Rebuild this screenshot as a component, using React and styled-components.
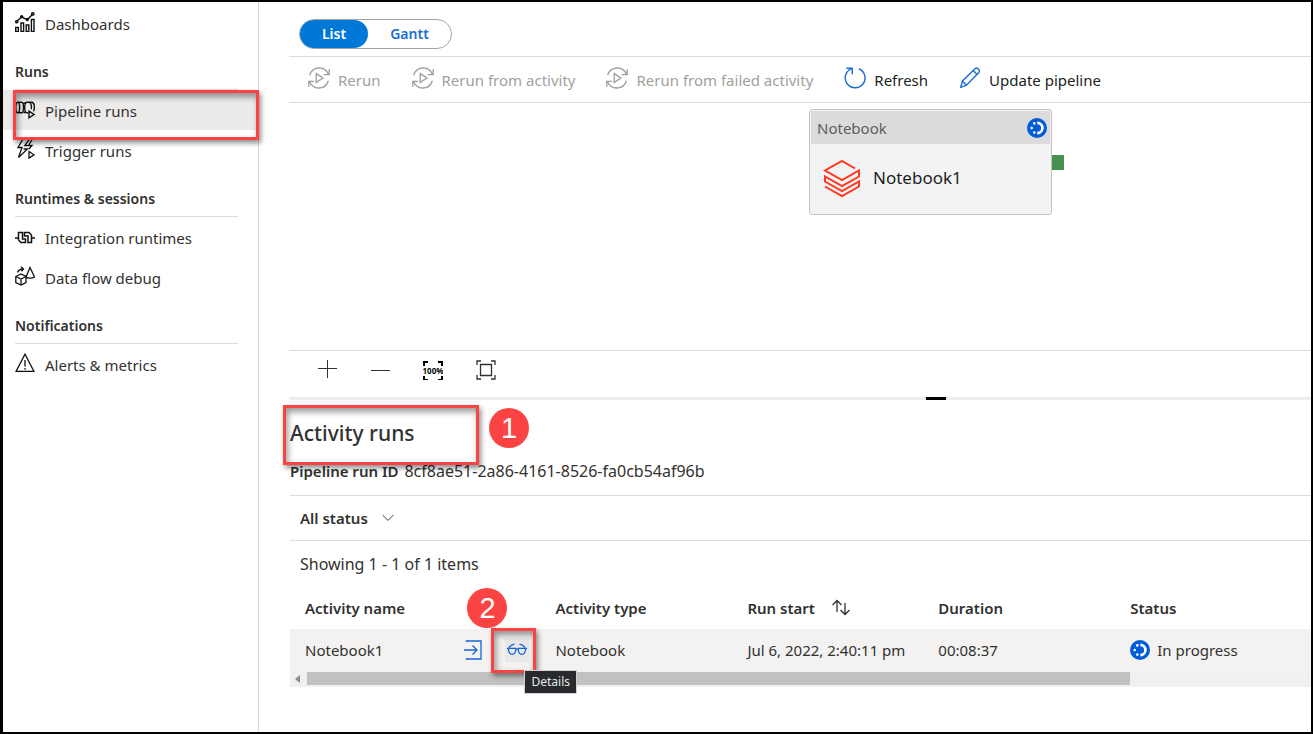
import React from "react";
import styled, { createGlobalStyle } from "styled-components";

const Global = createGlobalStyle`
  * { box-sizing: border-box; }
  body { margin: 0; background: #fff; }
  body, button, select { font-family: "Noto Sans", "Open Sans", sans-serif; font-size: 15px; line-height: 20px; color: #323130; }
  h1, h2, p { margin: 0; }
`;

const Frame = styled.div`
  display: flex;
  min-height: 100vh;
  border: 2px solid #000;
  border-left-width: 3px;
  background: #fff;
`;

const Sidebar = styled.nav`
  flex: none;
  width: 256px;
  padding-top: 1px;
  border-right: 1px solid #d6d6d6;
`;

const NavHeading = styled.h2`
  height: 47px;
  margin: 0 20px 0 12px;
  padding-top: 19px;
  border-bottom: 1px solid #dddcdb;
  font-size: 14px;
  line-height: 20px;
  font-weight: 600;
`;

const NavItem = styled.a`
  position: relative;
  display: flex;
  align-items: center;
  gap: 10px;
  height: 40px;
  padding: 2px 12px 0;
  background: ${(p) => (p.$active ? "#edebe9" : "transparent")};
  color: #323130;
  text-decoration: none;
  svg { margin-bottom: 4px; color: #111; }
`;

const Svg = styled.svg`
  display: block;
  flex: none;
  fill: none;
  stroke: currentColor;
  stroke-width: ${(p) => p.$weight || 1.3};
`;

const Callout = styled.span`
  position: absolute;
  z-index: 2;
  pointer-events: none;
  border: 3px solid #fc4343;
  box-shadow: 2px 3px 5px rgba(0, 0, 0, 0.45), inset 2px 4px 6px rgba(0, 0, 0, 0.4);
`;

const NavCallout = styled(Callout)`
  top: 0;
  left: 10px;
  width: 246px;
  height: 50px;
`;

const HeadingCallout = styled(Callout)`
  top: -12px;
  left: -7px;
  width: 196px;
  height: 60px;
`;

const DetailsCallout = styled(Callout)`
  top: -12px;
  left: -16px;
  width: 45px;
  height: 45px;
`;

const StepBadge = styled.span`
  position: absolute;
  z-index: 3;
  display: flex;
  align-items: center;
  justify-content: center;
  width: 40px;
  height: 40px;
  border-radius: 50%;
  background: #fc4343;
  color: #fff;
  font: 400 29px/40px "Liberation Sans", sans-serif;
`;

const HeadingBadge = styled(StepBadge)`
  top: -9px;
  left: 199px;
`;

const DetailsBadge = styled(StepBadge)`
  top: -52px;
  left: -40px;
`;

const Main = styled.main`
  flex: 1;
  min-width: 0;
  padding-left: 30px;
  overflow: hidden;
`;

const ViewBar = styled.div`
  padding: 17px 10px 7px;
  border-bottom: 1px solid #dddcdb;
`;

const Toggle = styled.div`
  display: flex;
  width: 153px;
  height: 30px;
  border: 1px solid #a6a4a2;
  border-radius: 15px;
`;

const ToggleButton = styled.button`
  flex: ${(p) => (p.$active ? "0 0 68px" : "1")};
  padding: 0;
  border: 0;
  border-radius: 15px;
  background: ${(p) => (p.$active ? "#0078d7" : "transparent")};
  color: ${(p) => (p.$active ? "#fff" : "#1b6ed2")};
  font-size: 14px;
  font-weight: 600;
  text-align: center;
`;

const Toolbar = styled.div`
  display: flex;
  align-items: center;
  gap: 31px;
  height: 46px;
  padding-left: 19px;
  border-bottom: 1px solid #dddcdb;
`;

const ToolButton = styled.button`
  display: flex;
  align-items: center;
  gap: 8px;
  flex: none;
  padding: 0;
  border: 0;
  background: none;
  color: #201f1e;
  white-space: nowrap;
  &:disabled { color: #a19f9d; }
  svg { color: ${(p) => (p.disabled ? "#a19f9d" : "#1b6ed2")}; margin-bottom: 4px; }
`;

const Canvas = styled.div`
  position: relative;
  height: 247px;
`;

const Node = styled.section`
  position: absolute;
  top: 6px;
  left: 520px;
  width: 243px;
  height: 106px;
  padding: 1px;
  border: 1px solid #c4c4c4;
  border-radius: 3px;
  background: #f3f3f3;
`;

const NodeHeader = styled.header`
  display: flex;
  align-items: center;
  justify-content: space-between;
  height: 33px;
  padding: 1px 3px 0 6px;
  background: #dbdbdb;
  color: #605e5c;
`;

const NodeBody = styled.div`
  display: flex;
  align-items: center;
  gap: 12px;
  height: 68px;
  padding-left: 12px;
  color: #201f1e;
  font-size: 17px;
`;

const Port = styled.span`
  position: absolute;
  top: 45px;
  left: 242px;
  width: 12px;
  height: 15px;
  background: #479150;
`;

const ZoomBar = styled.div`
  display: flex;
  align-items: center;
  gap: 33px;
  height: 47px;
  padding: 0 28px 9px;
  border-top: 1px solid #dddcdb;
`;

const IconButton = styled.button`
  position: relative;
  display: block;
  padding: 0;
  border: 0;
  background: ${(p) => (p.$hover ? "#e9e8e7" : "none")};
  box-shadow: ${(p) => (p.$hover ? "0 0 0 2px #e9e8e7" : "none")};
  color: ${(p) => (p.$blue ? "#1464d8" : "#323130")};
`;

const Splitter = styled.div`
  display: flex;
  justify-content: center;
  height: 3px;
  background: #ededed;
  padding-left: 272px;
`;

const Handle = styled.span`
  width: 20px;
  background: #000;
`;

const RunsHeader = styled.header`
  height: 95px;
  padding: 17px 0 0 1px;
`;

const Title = styled.h1`
  position: relative;
  font-size: 21px;
  line-height: 32px;
  font-weight: 500;
`;

const RunId = styled.p`
  display: flex;
  gap: 6px;
  padding-top: 12px;
  font-size: 16px;
  strong { font-size: 15px; font-weight: 600; }
`;

const Filters = styled.div`
  display: flex;
  align-items: center;
  height: 46px;
  margin-left: 1px;
  padding: 0 10px;
  border: solid #dddcdb;
  border-width: 1px 0;
`;

const StatusPicker = styled.label`
  display: flex;
  align-items: center;
  gap: 14px;
`;

const StatusSelect = styled.select`
  appearance: none;
  padding: 0;
  border: 0;
  background: none;
  font-weight: 600;
`;

const Summary = styled.p`
  padding: 13px 10px 13px 11px;
  font-size: 16px;
`;

const TableArea = styled.div`
  margin-left: 1px;
`;

const Table = styled.table`
  width: 100%;
  table-layout: fixed;
  border-collapse: collapse;
  text-align: left;
  th, td { padding: 0 0 0 15px; white-space: nowrap; }
  th + th, td + td { padding-left: 0; }
  th { height: 42px; font-weight: 600; }
  td { height: 43px; padding-bottom: 2px; background: #f3f2f1; }
`;

const Col = styled.col`
  width: ${(p) => p.$w};
`;

const Cell = styled.div`
  display: flex;
  align-items: center;
  gap: ${(p) => p.$gap || 0}px;
`;

const Actions = styled.span`
  display: flex;
  gap: 24px;
  margin-left: auto;
  padding-right: 28px;
`;

const Tooltip = styled.span`
  position: absolute;
  z-index: 4;
  top: 30px;
  left: 17px;
  padding: 0 6px;
  border: 1px solid #d0d0d0;
  background: #292a2e;
  color: #e6e6e6;
  font-size: 12px;
  line-height: 22px;
`;

const ScrollTrack = styled.div`
  display: flex;
  align-items: center;
  height: 15px;
  padding: 0 0 2px 5px;
  background: #f0f0f0;
`;

const ScrollThumb = styled.span`
  width: 81%;
  height: 13px;
  margin-left: 7px;
  background: #c1c1c1;
`;

function Icon({ size = 20, weight, children }) {
  return (
    <Svg width={size} height={size} viewBox="0 0 20 20" $weight={weight} aria-hidden="true">
      {children}
    </Svg>
  );
}

const DashboardIcon = () => (
  <Icon weight={1.4}>
    <path d="M.7 15.500h2.600v4H.7zM6 11h2.600v8.500H6zM11.200 13h2.600v6.500h-2.600zM16.400 7.500H19v12h-2.600z" />
    <path d="m1.700 9.500 5-4.700 5.600 3 5.500-5.900" />
    <circle cx="17.800" cy="1.900" r="1.200" /><circle cx="12.300" cy="7.500" r="1" /><circle cx="6.700" cy="4.800" r="1" /><circle cx="1.700" cy="9.700" r="1.100" />
  </Icon>
);

const PipelineIcon = () => (
  <Icon weight={1.4}>
    <path d="M2.700 3.200c-2.600 0-2.600 10.600 0 10.600s2.600-10.600 0-10.600h3.800c2.600 0 2.600 10.600 0 10.600H2.700M8.500 4h3M8.500 13.500h3M11.500 3.200c-2.400 1-2.400 9.600 0 10.600M11.500 3.200h5c3.200 0 3.500 6 2 9M14.500 3.200c1.800 1 2.200 5 1.700 7M11.500 13.800h2" />
    <path d="m14 12.200 5 3.300-5 3.300z" fill="#edebe9" />
  </Icon>
);

const TriggerIcon = () => (
  <Icon>
    <path d="M8 0 3 8.500h4L3.500 18.500l9-8.500h-4M14.500 0l-4.700 6.500h3M17.500 0l-4 6.500h3.500l-3 3.500" />
    <path d="m14 12.500 5 3.300-5 3.300z" fill="#fff" />
  </Icon>
);

const RuntimeIcon = () => (
  <Icon weight={1.5}>
    <path d="M0 12h3.500M16.500 12H20M3.500 14V6.500h4V13h3v3.500H6L3.500 14M16.500 9v7.500H13V10H9.500V6.500H14L16.500 9" />
  </Icon>
);

const DataFlowIcon = () => (
  <Icon>
    <path d="M.8 10.500 6 8l5 2.500v6L6 19 .8 16.500zM.8 10.500 6 13l5-2.500M6 13v6M2.500 6.500c1-3 3-3.500 6-3.500M6 .8 8.500 3 6.500 5.400M15 1.500 11 11c2 1.700 6.500 1.500 8.500 0z" />
  </Icon>
);

const AlertIcon = () => (
  <Icon><path d="M10 1.200 19 18.400H1zM10 7v6.500M10 15v1.700" /></Icon>
);

const RerunIcon = () => (
  <Icon size={22} weight={1.2}>
    <path d="M1.500 7.500A9 9 0 0 1 18.500 6.500M19.300 2v5h-5M18.500 12.500A9 9 0 0 1 1.500 13.500M.7 18v-5h5M7.500 6v8l6-4z" />
  </Icon>
);

const RefreshIcon = () => (
  <Icon size={22}><path d="M13.500 1.600A9 9 0 1 1 7 1.500M2 1.200h5.500v5.300" /></Icon>
);

const PencilIcon = () => (
  <Icon size={22}><path d="m1.500 18.500 1.700-5.800L14.500 1.500c1.800-1.800 5.200 1.500 3.500 3.500L6.800 16.500zM3.200 12.700l3.600 3.800M12.800 3.200l3.700 3.700" /></Icon>
);

const NotebookIcon = () => (
  <Svg width="38" height="40" viewBox="0 0 38 40" $weight={2} color="#ff3621" aria-hidden="true">
    <path d="M32 10.500 19 3 2 12.500l17 9.500 17-9.500v6L19 28 2 18.500v5L19 33l17-9.500v5L19 38 2 28.500" />
  </Svg>
);

const ProgressIcon = () => (
  <Icon>
    <g stroke="none">
      <circle cx="10" cy="10" r="10" fill="#015cda" />
      <path d="M10.300 3.500a6.500 6.500 0 0 1 0 13v-2.700a3.800 3.800 0 0 0 0-7.600z" fill="#fff" />
      <g fill="#fff"><circle cx="7.300" cy="5.400" r="1.300" /><circle cx="4.700" cy="10" r="1.300" /><circle cx="7.300" cy="14.600" r="1.300" /></g>
    </g>
  </Icon>
);

export default function App() {
  return (
    <>
      <Global />
      <Frame>
        <Sidebar>
          <NavItem href="#dashboards"><DashboardIcon />Dashboards</NavItem>
          <NavHeading>Runs</NavHeading>
          <NavItem href="#pipeline-runs" $active><PipelineIcon />Pipeline runs<NavCallout /></NavItem>
          <NavItem href="#trigger-runs"><TriggerIcon />Trigger runs</NavItem>
          <NavHeading>Runtimes &amp; sessions</NavHeading>
          <NavItem href="#runtimes"><RuntimeIcon />Integration runtimes</NavItem>
          <NavItem href="#data-flow"><DataFlowIcon />Data flow debug</NavItem>
          <NavHeading>Notifications</NavHeading>
          <NavItem href="#alerts"><AlertIcon />Alerts &amp; metrics</NavItem>
        </Sidebar>
        <Main>
          <ViewBar>
            <Toggle>
              <ToggleButton $active>List</ToggleButton>
              <ToggleButton>Gantt</ToggleButton>
            </Toggle>
          </ViewBar>
          <Toolbar>
            <ToolButton disabled><RerunIcon />Rerun</ToolButton>
            <ToolButton disabled><RerunIcon />Rerun from activity</ToolButton>
            <ToolButton disabled><RerunIcon />Rerun from failed activity</ToolButton>
            <ToolButton><RefreshIcon />Refresh</ToolButton>
            <ToolButton><PencilIcon />Update pipeline</ToolButton>
          </Toolbar>
          <Canvas>
            <Node>
              <NodeHeader>Notebook<ProgressIcon /></NodeHeader>
              <NodeBody><NotebookIcon />Notebook1</NodeBody>
              <Port />
            </Node>
          </Canvas>
          <ZoomBar>
            <IconButton aria-label="Zoom in"><Icon weight={1}><path d="M10.500 0v18M1 8.500h19" /></Icon></IconButton>
            <IconButton aria-label="Zoom out"><Icon weight={1}><path d="M1 10.500h19" /></Icon></IconButton>
            <IconButton aria-label="Zoom to 100%">
              <Icon weight={2}>
                <path d="M1 6V2h4M15 2h4v4M19 16v4h-4M5 20H1v-4" stroke="#000" />
                <text x="10" y="14" textAnchor="middle" fontSize="8" fontWeight="700" fill="#000" stroke="none">100%</text>
              </Icon>
            </IconButton>
            <IconButton aria-label="Zoom to fit"><Icon><path d="M1 5V1h4M15 1h4v4M19 15v4h-4M5 19H1v-4M4.500 4.500h11v11h-11z" /></Icon></IconButton>
          </ZoomBar>
          <Splitter><Handle /></Splitter>
          <RunsHeader>
            <Title>Activity runs<HeadingCallout /><HeadingBadge>1</HeadingBadge></Title>
            <RunId><strong>Pipeline run ID</strong><span>8cf8ae51-2a86-4161-8526-fa0cb54af96b</span></RunId>
          </RunsHeader>
          <Filters>
            <StatusPicker>
              <StatusSelect aria-label="Status filter"><option>All status</option></StatusSelect>
              <Icon size={12} weight={1.6}><path d="m1 5 9 9 9-9" /></Icon>
            </StatusPicker>
          </Filters>
          <Summary>Showing 1 - 1 of 1 items</Summary>
          <TableArea>
            <Table>
              <colgroup>
                <Col $w="26%" /><Col $w="18.8%" /><Col $w="18.7%" /><Col $w="18.8%" /><Col />
              </colgroup>
              <thead>
                <tr>
                  <th>Activity name</th><th>Activity type</th>
                  <th>
                    <Cell $gap={16}>Run start<Icon><path d="M6 14V2.500M1.500 7 6 2.500 10.500 7M14 5v11.500M9.500 12 14 16.500l4.500-4.500" /></Icon></Cell>
                  </th>
                  <th>Duration</th><th>Status</th>
                </tr>
              </thead>
              <tbody>
                <tr>
                  <td>
                    <Cell>
                      Notebook1
                      <Actions>
                        <IconButton $blue aria-label="Input"><Icon><path d="M3.500 2V1H18v18H3.500v-1M1 10h13M9.500 5.500 14 10l-4.500 4.500" /></Icon></IconButton>
                        <IconButton $blue $hover aria-label="Details">
                          <Icon><path d="M1.500 8.300h7.300c.6 8-7.900 8-7.300 0zM11.200 8.300h7.300c.6 8-7.900 8-7.300 0zM0 8.500h1.500M18.500 8.500H20M8.800 9.500c.8-.6 1.600-.6 2.400 0M2 7.500 4.500 5l3-.8M18 7.500 15.500 5l-3-.8" /></Icon>
                          <DetailsCallout /><DetailsBadge>2</DetailsBadge><Tooltip>Details</Tooltip>
                        </IconButton>
                      </Actions>
                    </Cell>
                  </td>
                  <td>Notebook</td><td>Jul 6, 2022, 2:40:11 pm</td><td>00:08:37</td>
                  <td><Cell $gap={7}><ProgressIcon />In progress</Cell></td>
                </tr>
              </tbody>
            </Table>
            <ScrollTrack><Svg width="5" height="8" viewBox="0 0 5 8"><path d="M5 0v8L0 4z" fill="#8a8a8a" stroke="none" /></Svg><ScrollThumb /></ScrollTrack>
          </TableArea>
        </Main>
      </Frame>
    </>
  );
}
